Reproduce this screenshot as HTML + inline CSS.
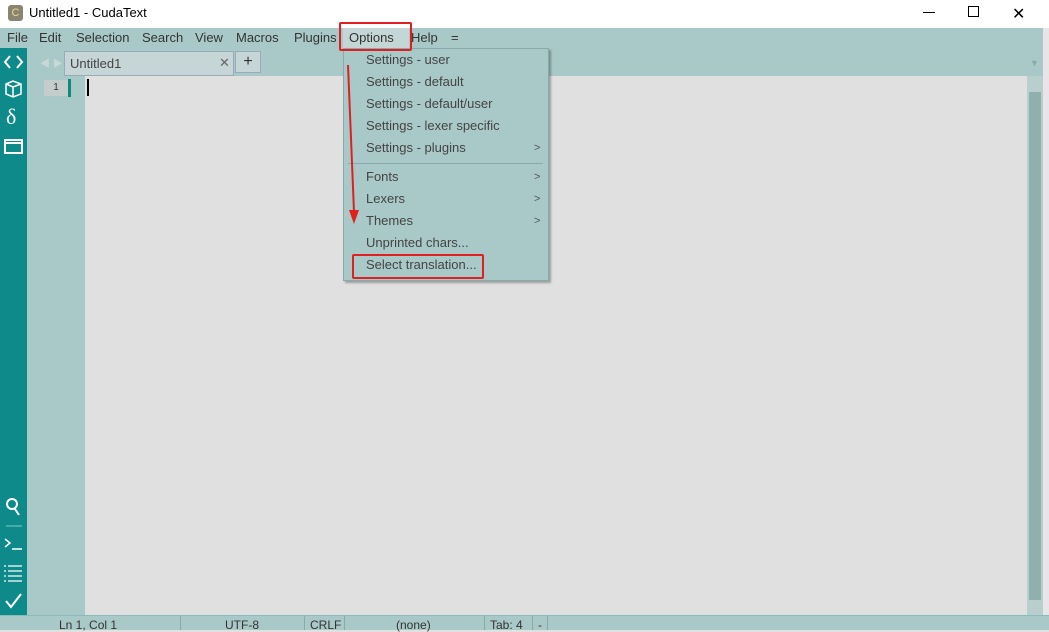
<!DOCTYPE html>
<html><head><style>
*{margin:0;padding:0;box-sizing:border-box}
body{width:1049px;height:630px;overflow:hidden;background:#e0e0e0;font-family:"Liberation Sans","Noto Sans CJK SC",sans-serif;font-size:13px;color:#333;position:relative}
.a{position:absolute}
.m{position:absolute;top:30px;color:#333}
.i{position:absolute;left:366px;color:#444}
.r{position:absolute;left:534px;color:#555;font-size:11px}
</style></head><body>
<div class="a" style="left:0;top:0;width:1049px;height:28px;background:#fff"></div>
<div class="a" style="left:8px;top:5px;width:15px;height:16px;background:#8a8570;border-radius:3px;color:#e8d890;font-size:11px;text-align:center;line-height:16px">C</div>
<div class="a" style="left:29px;top:5px;font-size:13px;color:#000">Untitled1 - CudaText</div>
<div class="a" style="left:923px;top:12px;width:12px;height:1px;background:#000"></div>
<div class="a" style="left:968px;top:6px;width:11px;height:11px;border:1px solid #000"></div>
<div class="a" style="left:1012px;top:4px;font-size:16px;color:#000">✕</div>
<div class="a" style="left:0;top:28px;width:1049px;height:20px;background:#a9c9c8"></div>
<div class="m" style="left:7px">File</div>
<div class="m" style="left:39px">Edit</div>
<div class="m" style="left:76px">Selection</div>
<div class="m" style="left:142px">Search</div>
<div class="m" style="left:195px">View</div>
<div class="m" style="left:236px">Macros</div>
<div class="m" style="left:294px">Plugins</div>
<div class="a" style="left:343px;top:28px;width:66px;height:20px;background:#c4d6d5"></div>
<div class="m" style="left:349px">Options</div>
<div class="m" style="left:411px">Help</div>
<div class="m" style="left:451px">=</div>
<div class="a" style="left:0;top:48px;width:1049px;height:28px;background:#a9c9c8"></div>
<div class="a" style="left:40px;top:55px;color:#c8d8d8;font-size:10px">◀ ▶</div>
<div class="a" style="left:64px;top:51px;width:170px;height:25px;background:#c6d6d6;border:1px solid #9ab"></div>
<div class="a" style="left:70px;top:56px;color:#444">Untitled1</div>
<div class="a" style="left:219px;top:55px;color:#666">✕</div>
<div class="a" style="left:235px;top:51px;width:26px;height:22px;background:#c6d6d6;border:1px solid #9ab;text-align:center;font-size:16px;line-height:20px">+</div>
<div class="a" style="left:1030px;top:58px;color:#8aa;font-size:9px">▼</div>
<div class="a" style="left:0;top:48px;width:27px;height:567px;background:#0e8a8a"></div>
<svg class="a" style="left:0;top:48px" width="27" height="567" fill="none" stroke="#fff" stroke-width="2">
<path d="M10 8 L5 14 L10 20 M17 8 L22 14 L17 20"/>
<path d="M6 36 L13 33 L21 36 L21 46 L13 49 L6 46 Z M6 36 L13 39 L21 36 M13 39 L13 49" stroke-width="1.5"/>
<path d="M5 92 H22 V105 H5 Z M5 95 H22" />
<circle cx="12" cy="456" r="5"/><path d="M15 461 L19 467"/>
<path d="M6 478 H22" stroke="#7cc" stroke-width="1"/>
<path d="M5 491 L10 495 L5 499 M12 501 H22" stroke-width="1.5"/>
<path d="M8 518 H22 M8 523 H22 M8 528 H22 M8 533 H22 M4 518 H6 M4 523 H6 M4 528 H6 M4 533 H6" stroke-width="1.3"/>
<path d="M6 553 L11 559 L21 546"/>
</svg>
<div class="a" style="left:6px;top:104px;color:#fff;font-size:22px;font-family:'Liberation Serif',serif">δ</div>
<div class="a" style="left:27px;top:76px;width:58px;height:539px;background:#a9c9c8"></div>
<div class="a" style="left:44px;top:80px;width:24px;height:16px;background:#c4cccc;font-size:10px;text-align:center;line-height:16px">1</div>
<div class="a" style="left:68px;top:79px;width:3px;height:18px;background:#0e8a7a"></div>
<div class="a" style="left:87px;top:79px;width:2px;height:17px;background:#000"></div>
<div class="a" style="left:1027px;top:76px;width:16px;height:539px;background:#b8cfcd"></div>
<div class="a" style="left:1029px;top:92px;width:12px;height:508px;background:#8fb0ad"></div>
<div class="a" style="left:1043px;top:28px;width:6px;height:602px;background:#e6e6e6"></div>
<div class="a" style="left:0;top:615px;width:1049px;height:15px;background:#a9c9c8;border-top:1px solid #8bb"></div>
<div class="a" style="left:59px;top:618px;font-size:12px">Ln 1, Col 1</div>
<div class="a" style="left:180px;top:616px;width:1px;height:14px;background:#8aa"></div>
<div class="a" style="left:225px;top:618px;font-size:12px">UTF-8</div>
<div class="a" style="left:304px;top:616px;width:1px;height:14px;background:#8aa"></div>
<div class="a" style="left:310px;top:618px;font-size:12px">CRLF</div>
<div class="a" style="left:344px;top:616px;width:1px;height:14px;background:#8aa"></div>
<div class="a" style="left:396px;top:618px;font-size:12px">(none)</div>
<div class="a" style="left:484px;top:616px;width:1px;height:14px;background:#8aa"></div>
<div class="a" style="left:490px;top:618px;font-size:12px">Tab: 4</div>
<div class="a" style="left:532px;top:616px;width:1px;height:14px;background:#8aa"></div>
<div class="a" style="left:538px;top:618px;font-size:12px">-</div>
<div class="a" style="left:547px;top:616px;width:1px;height:14px;background:#8aa"></div>
<!-- menu -->
<div class="a" style="left:343px;top:48px;width:206px;height:233px;background:#a9c9c8;border:1px solid #8aa;box-shadow:2px 2px 2px rgba(0,0,0,.3)"></div>
<div class="i" style="top:52px">Settings - user</div>
<div class="i" style="top:74px">Settings - default</div>
<div class="i" style="top:96px">Settings - default/user</div>
<div class="i" style="top:118px">Settings - lexer specific</div>
<div class="i" style="top:140px">Settings - plugins</div>
<div class="a" style="left:348px;top:163px;width:195px;height:1px;background:#8aa"></div>
<div class="i" style="top:169px">Fonts</div>
<div class="i" style="top:191px">Lexers</div>
<div class="i" style="top:213px">Themes</div>
<div class="i" style="top:235px">Unprinted chars...</div>
<div class="i" style="top:257px">Select translation...</div>
<div class="r" style="top:142px">&gt;</div>
<div class="r" style="top:171px">&gt;</div>
<div class="r" style="top:193px">&gt;</div>
<div class="r" style="top:215px">&gt;</div>
<!-- annotations -->
<div class="a" style="left:339px;top:22px;width:73px;height:29px;border:2px solid #e02020;border-radius:2px"></div>
<div class="a" style="left:352px;top:254px;width:132px;height:25px;border:2px solid #e02020;border-radius:2px"></div>
<svg class="a" style="left:340px;top:60px" width="30" height="170"><line x1="8" y1="5" x2="14" y2="152" stroke="#e02020" stroke-width="2"/><polygon points="9,150 19,150 14,164" fill="#e02020"/></svg>
</body></html>
